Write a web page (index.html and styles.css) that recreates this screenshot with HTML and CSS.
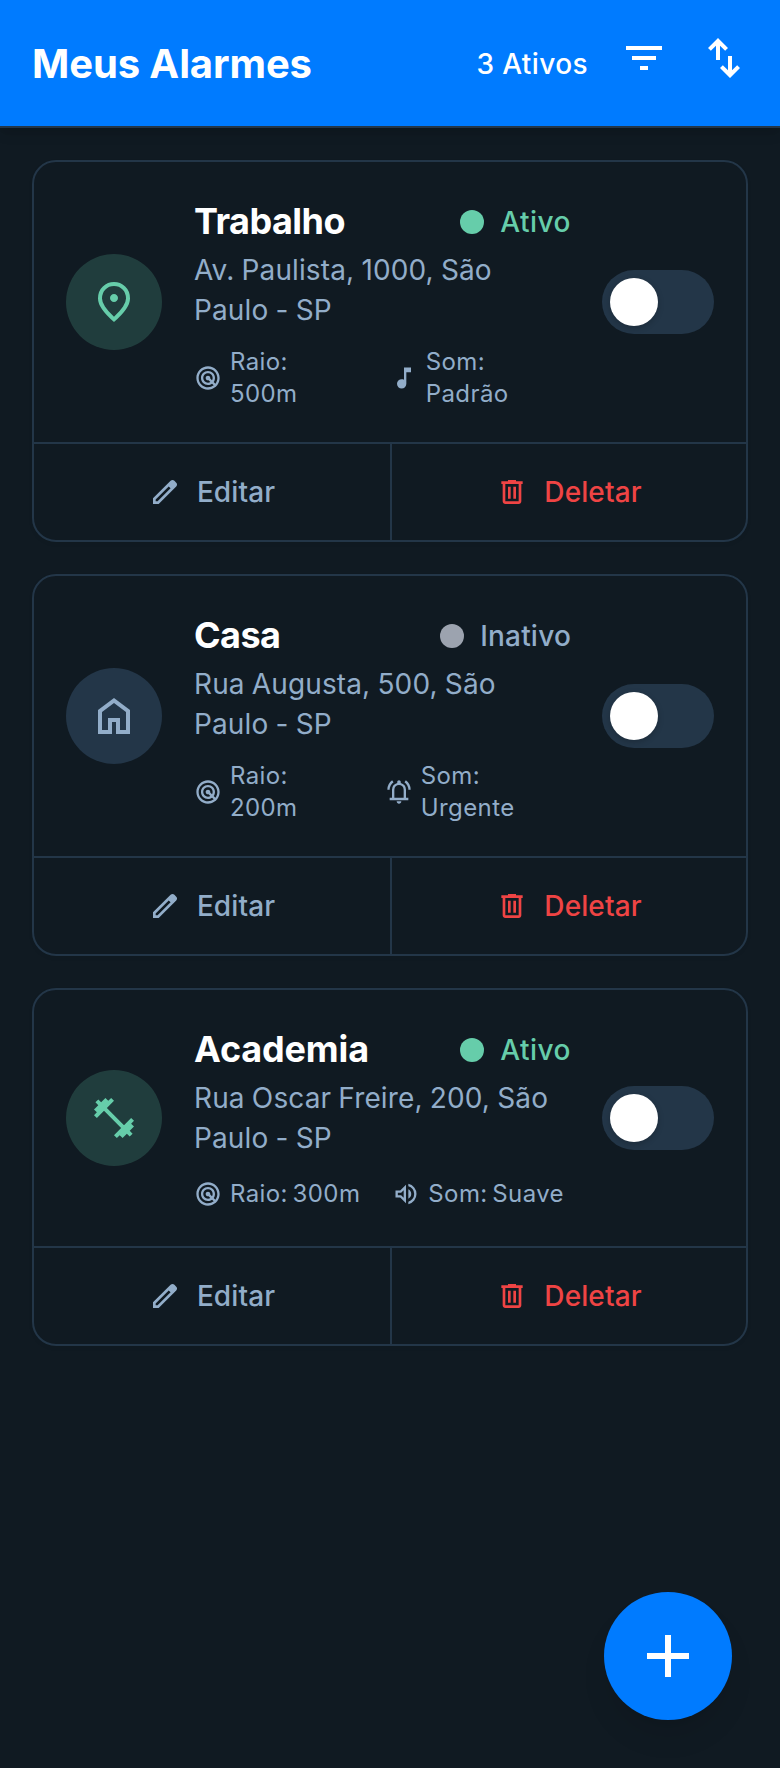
FILE: index.html
```html
<!DOCTYPE html>
<html lang="pt-BR">
<head>
<meta charset="utf-8">
<title>Meus Alarmes</title>
<link rel="stylesheet" href="styles.css">
</head>
<body>
<svg class="sprite" aria-hidden="true">
  <symbol id="filter" viewBox="0 0 24 24"><path d="M10 18v-2h4v2zM6 13v-2h12v2zM3 8V6h18v2z"/></symbol>
  <symbol id="swap" viewBox="0 0 24 24"><path d="M8 13V5.825L5.425 8.4 4 7l5-5 5 5-1.425 1.4L10 5.825V13zm7 9-5-5 1.425-1.4L14 18.175V11h2v7.175l2.575-2.575L20 17z"/></symbol>
  <symbol id="pin" viewBox="0 0 24 24"><path d="M12 12q.825 0 1.4125-.5875T14 10t-.5875-1.4125T12 8t-1.4125.5875T10 10t.5875 1.4125T12 12m0 7.35q3.05-2.8 4.525-5.0875T18 10.2q0-2.725-1.7375-4.4625T12 4 7.7375 5.7375 6 10.2q0 1.775 1.475 4.0625T12 19.35M12 22q-4.025-3.425-6.0125-6.3625T4 10.2q0-3.75 2.4125-5.975T12 2t5.5875 2.225T20 10.2q0 2.5-1.9875 5.4375T12 22"/></symbol>
  <symbol id="home" viewBox="0 0 24 24"><path d="M6 19h3v-6h6v6h3v-9l-6-4.5L6 10zm-2 2V9l8-6 8 6v12h-7v-6h-2v6z"/></symbol>
  <symbol id="gym" viewBox="0 0 24 24"><path d="M20.57 14.86 22 13.43 20.57 12 17 15.57 8.43 7 12 3.43 10.57 2 9.14 3.43 7.71 2 5.57 4.14 4.14 2.71 2.71 4.14l1.43 1.43L2 7.71l1.43 1.43L2 10.57 3.43 12 7 8.43 15.57 17 12 20.57 13.43 22l1.43-1.43L16.29 22l2.14-2.14 1.43 1.43 1.43-1.43-1.43-1.43L22 16.29z"/></symbol>
  <symbol id="radar" viewBox="0 0 24 24"><path d="M19.74 18.33C21.15 16.6 22 14.4 22 12c0-5.52-4.48-10-10-10S2 6.48 2 12s4.48 10 10 10c2.4 0 4.6-.85 6.33-2.26.27-.22.53-.46.78-.71.03-.03.05-.06.07-.08.2-.2.39-.41.56-.62zM12 20c-4.41 0-8-3.59-8-8s3.59-8 8-8 8 3.59 8 8c0 1.85-.63 3.54-1.69 4.9l-1.43-1.43c.69-.98 1.1-2.17 1.1-3.46 0-3.31-2.69-6-6-6s-6 2.69-6 6 2.69 6 6 6c1.3 0 2.51-.42 3.49-1.13l1.42 1.42C15.54 19.37 13.85 20 12 20zm1.92-7.49c.17-.66.02-1.38-.49-1.9l-.02-.02c-.77-.77-2-.78-2.78-.04-.01.01-.03.02-.05.04-.78.78-.78 2.05 0 2.83l.02.02c.52.51 1.25.67 1.91.49l1.51 1.51c-.6.36-1.29.58-2.04.58-2.21 0-4-1.79-4-4s1.79-4 4-4 4 1.79 4 4c0 .73-.21 1.41-.56 2z"/></symbol>
  <symbol id="note" viewBox="0 0 24 24"><path d="M10 21q-1.65 0-2.825-1.175T6 17t1.175-2.825T10 13q.575 0 1.0625.1375T12 13.55V3h6v4h-4v10q0 1.65-1.175 2.825T10 21"/></symbol>
  <symbol id="bell" viewBox="0 0 24 24"><path d="M2 10q0-2.5 1.1125-4.5875T6.1 1.95l1.2 1.6Q5.8 4.65 4.9 6.325T4 10zm18 0q0-2-.9-3.675T16.7 3.55l1.2-1.6q1.875 1.375 2.9875 3.4625T22 10zM4 19v-2h2v-7q0-2.075 1.25-3.6875T10.5 4.2v-.7q0-.625.4375-1.0625T12 2t1.0625.4375T13.5 3.5v.7q2 .5 3.25 2.1125T18 10v7h2v2zm8 3q-.825 0-1.4125-.5875T10 20h4q0 .825-.5875 1.4125T12 22m-4-5h8v-7q0-1.65-1.175-2.825T12 6 9.175 7.175 8 10z"/></symbol>
  <symbol id="volume" viewBox="0 0 24 24"><path d="M14 20.725v-2.05q2.25-.65 3.625-2.5t1.375-4.2-1.375-4.2T14 5.275v-2.05q3.1.7 5.05 3.1375T21 11.975t-1.95 5.6125T14 20.725M3 15V9h4l5-5v16l-5-5zm11 1V7.95q1.175.55 1.8375 1.65T16.5 12q0 1.275-.6625 2.3625T14 16m-4-7.15L7.85 11H5v2h2.85L10 15.15z"/></symbol>
  <symbol id="edit" viewBox="0 0 24 24"><path d="M5 19h1.425L16.2 9.225 14.775 7.8 5 17.575zm-2 2v-4.25L16.2 3.575q.3-.275.6625-.425t.7625-.15.775.15.65.45L20.425 5q.3.275.4375.65T21 6.4q0 .4-.1375.7625T20.425 7.825L7.25 21z"/></symbol>
  <symbol id="trash" viewBox="0 0 24 24"><path fill-rule="evenodd" d="M7 21q-.825 0-1.4125-.5875T5 19V6H4V4h5V3h6v1h5v2h-1v13q0 .825-.5875 1.4125T17 21zM17 6H7v13h10zM9 17h2V8H9zm4 0h2V8h-2z"/></symbol>
  <symbol id="plus" viewBox="0 0 24 24"><path d="M11 13H5v-2h6V5h2v6h6v2h-6v6h-2z"/></symbol>
</svg>

<header class="topbar">
  <h1 class="topbar-title">Meus Alarmes</h1>
  <div class="topbar-tools">
    <span class="topbar-count">3 Ativos</span>
    <svg class="tool-icon"><use href="#filter"/></svg>
    <svg class="tool-icon"><use href="#swap"/></svg>
  </div>
</header>

<main class="list">
  <article class="card">
    <div class="card-body">
      <div class="avatar active"><svg class="avatar-icon"><use href="#pin"/></svg></div>
      <div class="info">
        <div class="info-head">
          <h2 class="name">Trabalho</h2>
          <div class="status active"><span class="dot"></span><span>Ativo</span></div>
        </div>
        <p class="address">Av. Paulista, 1000, São Paulo - SP</p>
        <div class="meta">
          <div class="meta-item"><svg class="meta-icon"><use href="#radar"/></svg><span>Raio: 500m</span></div>
          <div class="meta-item"><svg class="meta-icon"><use href="#note"/></svg><span>Som: Padrão</span></div>
        </div>
      </div>
      <div class="switch"><span class="knob"></span></div>
    </div>
    <div class="actions">
      <button class="action"><svg class="action-icon"><use href="#edit"/></svg><span>Editar</span></button>
      <button class="action danger"><svg class="action-icon"><use href="#trash"/></svg><span>Deletar</span></button>
    </div>
  </article>

  <article class="card">
    <div class="card-body">
      <div class="avatar"><svg class="avatar-icon"><use href="#home"/></svg></div>
      <div class="info">
        <div class="info-head">
          <h2 class="name">Casa</h2>
          <div class="status"><span class="dot"></span><span>Inativo</span></div>
        </div>
        <p class="address">Rua Augusta, 500, São Paulo - SP</p>
        <div class="meta">
          <div class="meta-item"><svg class="meta-icon"><use href="#radar"/></svg><span>Raio: 200m</span></div>
          <div class="meta-item"><svg class="meta-icon"><use href="#bell"/></svg><span>Som: Urgente</span></div>
        </div>
      </div>
      <div class="switch"><span class="knob"></span></div>
    </div>
    <div class="actions">
      <button class="action"><svg class="action-icon"><use href="#edit"/></svg><span>Editar</span></button>
      <button class="action danger"><svg class="action-icon"><use href="#trash"/></svg><span>Deletar</span></button>
    </div>
  </article>

  <article class="card">
    <div class="card-body">
      <div class="avatar active"><svg class="avatar-icon"><use href="#gym"/></svg></div>
      <div class="info">
        <div class="info-head">
          <h2 class="name name-wide">Academia</h2>
          <div class="status active"><span class="dot"></span><span>Ativo</span></div>
        </div>
        <p class="address">Rua Oscar Freire, 200, São Paulo - SP</p>
        <div class="meta">
          <div class="meta-item"><svg class="meta-icon"><use href="#radar"/></svg><span>Raio: 300m</span></div>
          <div class="meta-item"><svg class="meta-icon"><use href="#volume"/></svg><span>Som: Suave</span></div>
        </div>
      </div>
      <div class="switch"><span class="knob"></span></div>
    </div>
    <div class="actions">
      <button class="action"><svg class="action-icon"><use href="#edit"/></svg><span>Editar</span></button>
      <button class="action danger"><svg class="action-icon"><use href="#trash"/></svg><span>Deletar</span></button>
    </div>
  </article>
</main>

<button class="fab" aria-label="Adicionar"><svg class="fab-icon"><use href="#plus"/></svg></button>
</body>
</html>
```
FILE: styles.css
```css
* { box-sizing: border-box; margin: 0; padding: 0; }

body {
  min-height: 1768px;
  background: #101a22;
  color: #92adc9;
  font-family: Inter, "Liberation Sans", sans-serif;
  font-size: 28px;
  line-height: 40px;
  font-variation-settings: "opsz" 14;
}

svg { display: block; flex: none; fill: currentColor; }
.sprite { position: absolute; width: 0; height: 0; }

.topbar {
  display: flex;
  align-items: center;
  justify-content: space-between;
  height: 128px;
  padding: 0 32px;
  background: #007bff;
  border-bottom: 2px solid #233648;
  box-shadow: 0 8px 12px -2px rgba(0, 0, 0, .1), 0 4px 8px -4px rgba(0, 0, 0, .1);
  color: #fff;
}
.topbar-title {
  padding-top: 2px;
  font-size: 40px;
  font-weight: 700;
  line-height: 50px;
  letter-spacing: -0.1px;
  font-variation-settings: "opsz" 20;
}
.topbar-tools { display: flex; align-items: center; gap: 32px; }
.topbar-count { padding-top: 2px; font-weight: 500; letter-spacing: .4px; }
.tool-icon { width: 48px; height: 48px; margin-bottom: 10px; }

.list { display: flex; flex-direction: column; gap: 32px; padding: 32px; }

.card {
  border: 2px solid #233648;
  border-radius: 24px;
  box-shadow: 0 2px 4px rgba(0, 0, 0, .05);
  overflow: hidden;
}
.card-body { display: flex; align-items: center; gap: 32px; padding: 32px; }

.avatar {
  display: flex;
  flex: none;
  align-items: center;
  justify-content: center;
  width: 96px;
  height: 96px;
  border-radius: 50%;
  background: #233648;
}
.avatar.active { background: rgba(102, 205, 170, .2); color: #66cdaa; }
.avatar-icon { width: 48px; height: 48px; }

.info { flex: 1; min-width: 0; }
.info-head { display: flex; align-items: center; justify-content: space-between; height: 56px; }
.name {
  padding-bottom: 2px;
  color: #fff;
  font-size: 36px;
  font-weight: 700;
  line-height: 54px;
  letter-spacing: -0.54px;
  font-variation-settings: "opsz" 18;
}
.name-wide { letter-spacing: -0.15px; }
.status { display: flex; align-items: center; gap: 16px; margin-right: -1px; font-weight: 500; letter-spacing: .2px; }
.dot { width: 24px; height: 24px; border-radius: 50%; background: #9ca3af; }
.status.active { color: #66cdaa; letter-spacing: .5px; }
.status.active .dot { background: #66cdaa; }

.address { letter-spacing: .12px; word-spacing: -.8px; }

.meta {
  display: flex;
  align-items: center;
  gap: 32px;
  margin-top: 16px;
  font-size: 24px;
  line-height: 32px;
  letter-spacing: .4px;
  word-spacing: -2.5px;
}
.meta-item { display: flex; align-items: center; gap: 8px; min-height: 40px; }
.meta-icon { width: 28px; height: 28px; }

.switch {
  display: flex;
  flex: none;
  width: 112px;
  height: 64px;
  padding: 8px;
  border-radius: 32px;
  background: #233648;
}
.knob {
  width: 48px;
  height: 48px;
  border-radius: 50%;
  background: #fff;
  box-shadow: 0 2px 6px rgba(0, 0, 0, .2);
}

.actions { display: flex; border-top: 2px solid #233648; }
.action {
  display: flex;
  flex: 1 1 50%;
  align-items: center;
  justify-content: center;
  gap: 16px;
  height: 96px;
  border: 0;
  background: none;
  color: inherit;
  font: inherit;
  font-weight: 500;
  font-variation-settings: inherit;
  letter-spacing: .1px;
}
.action + .action { border-left: 2px solid #233648; }
.action.danger { color: #ef4444; }
.action-icon { width: 32px; height: 32px; }

.fab {
  position: fixed;
  right: 48px;
  bottom: 48px;
  display: flex;
  align-items: center;
  justify-content: center;
  width: 128px;
  height: 128px;
  border: 0;
  border-radius: 50%;
  background: #007bff;
  color: #fff;
  box-shadow: 0 20px 30px -6px rgba(0, 0, 0, .1), 0 8px 12px -8px rgba(0, 0, 0, .1);
}
.fab-icon { width: 72px; height: 72px; }
```
